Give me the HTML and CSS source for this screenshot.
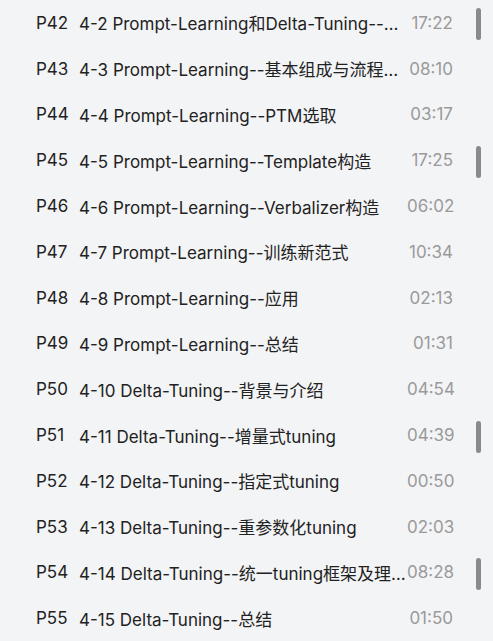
FILE: index.html
```html
<!DOCTYPE html>
<html lang="zh-CN">
<head>
  <meta charset="UTF-8">
  <meta name="viewport" content="width=device-width, initial-scale=1.0">
  <title>选集</title>
  <link rel="stylesheet" href="styles.css">
</head>
<body>
  <ul class="episodes">
    <li class="episode"><span class="num">P42</span><span class="title">4-2 Prompt-Learning和Delta-Tuning--背景和概览</span><span class="time">17:22</span><span class="track"><i class="bar"></i></span></li>
    <li class="episode"><span class="num">P43</span><span class="title">4-3 Prompt-Learning--基本组成与流程介绍</span><span class="time">08:10</span><span class="track"></span></li>
    <li class="episode"><span class="num">P44</span><span class="title">4-4 Prompt-Learning--PTM选取</span><span class="time">03:17</span><span class="track"></span></li>
    <li class="episode"><span class="num">P45</span><span class="title">4-5 Prompt-Learning--Template构造</span><span class="time">17:25</span><span class="track"><i class="bar"></i></span></li>
    <li class="episode"><span class="num">P46</span><span class="title">4-6 Prompt-Learning--Verbalizer构造</span><span class="time">06:02</span><span class="track"></span></li>
    <li class="episode"><span class="num">P47</span><span class="title">4-7 Prompt-Learning--训练新范式</span><span class="time">10:34</span><span class="track"></span></li>
    <li class="episode"><span class="num">P48</span><span class="title">4-8 Prompt-Learning--应用</span><span class="time">02:13</span><span class="track"></span></li>
    <li class="episode"><span class="num">P49</span><span class="title">4-9 Prompt-Learning--总结</span><span class="time">01:31</span><span class="track"></span></li>
    <li class="episode"><span class="num">P50</span><span class="title">4-10 Delta-Tuning--背景与介绍</span><span class="time">04:54</span><span class="track"></span></li>
    <li class="episode"><span class="num">P51</span><span class="title">4-11 Delta-Tuning--增量式tuning</span><span class="time">04:39</span><span class="track"><i class="bar"></i></span></li>
    <li class="episode"><span class="num">P52</span><span class="title">4-12 Delta-Tuning--指定式tuning</span><span class="time">00:50</span><span class="track"></span></li>
    <li class="episode"><span class="num">P53</span><span class="title">4-13 Delta-Tuning--重参数化tuning</span><span class="time">02:03</span><span class="track"></span></li>
    <li class="episode"><span class="num">P54</span><span class="title">4-14 Delta-Tuning--统一tuning框架及理论分析</span><span class="time">08:28</span><span class="track"><i class="bar"></i></span></li>
    <li class="episode"><span class="num">P55</span><span class="title">4-15 Delta-Tuning--总结</span><span class="time">01:50</span><span class="track"></span></li>
  </ul>
</body>
</html>
```

FILE: styles.css
```css
body {
  margin: 0;
  background-color: #f3f4f6;
  font-family: 'Inter', 'Noto Sans CJK SC', sans-serif;
  color: #222;
}

.episodes {
  list-style: none;
  margin: 0;
  padding: 0;
}

.episode {
  display: flex;
  align-items: center;
  height: 45.8px;
  padding-left: 36px;
  font-size: 17px;
  white-space: nowrap;
}

.num {
  width: 43px;
  flex-shrink: 0;
}

.title {
  flex: 1;
  min-width: 0;
  overflow: hidden;
  text-overflow: ellipsis;
}

.time {
  width: 46px;
  flex-shrink: 0;
  text-align: right;
  color: #9a9a9a;
}

.track {
  width: 40px;
  flex-shrink: 0;
  display: flex;
  justify-content: center;
  padding-left: 10px;
  box-sizing: border-box;
}

.bar {
  display: block;
  width: 5px;
  height: 32px;
  margin-top: 3px;
  border-radius: 3px;
  background-color: #8a8a8a;
}
```
